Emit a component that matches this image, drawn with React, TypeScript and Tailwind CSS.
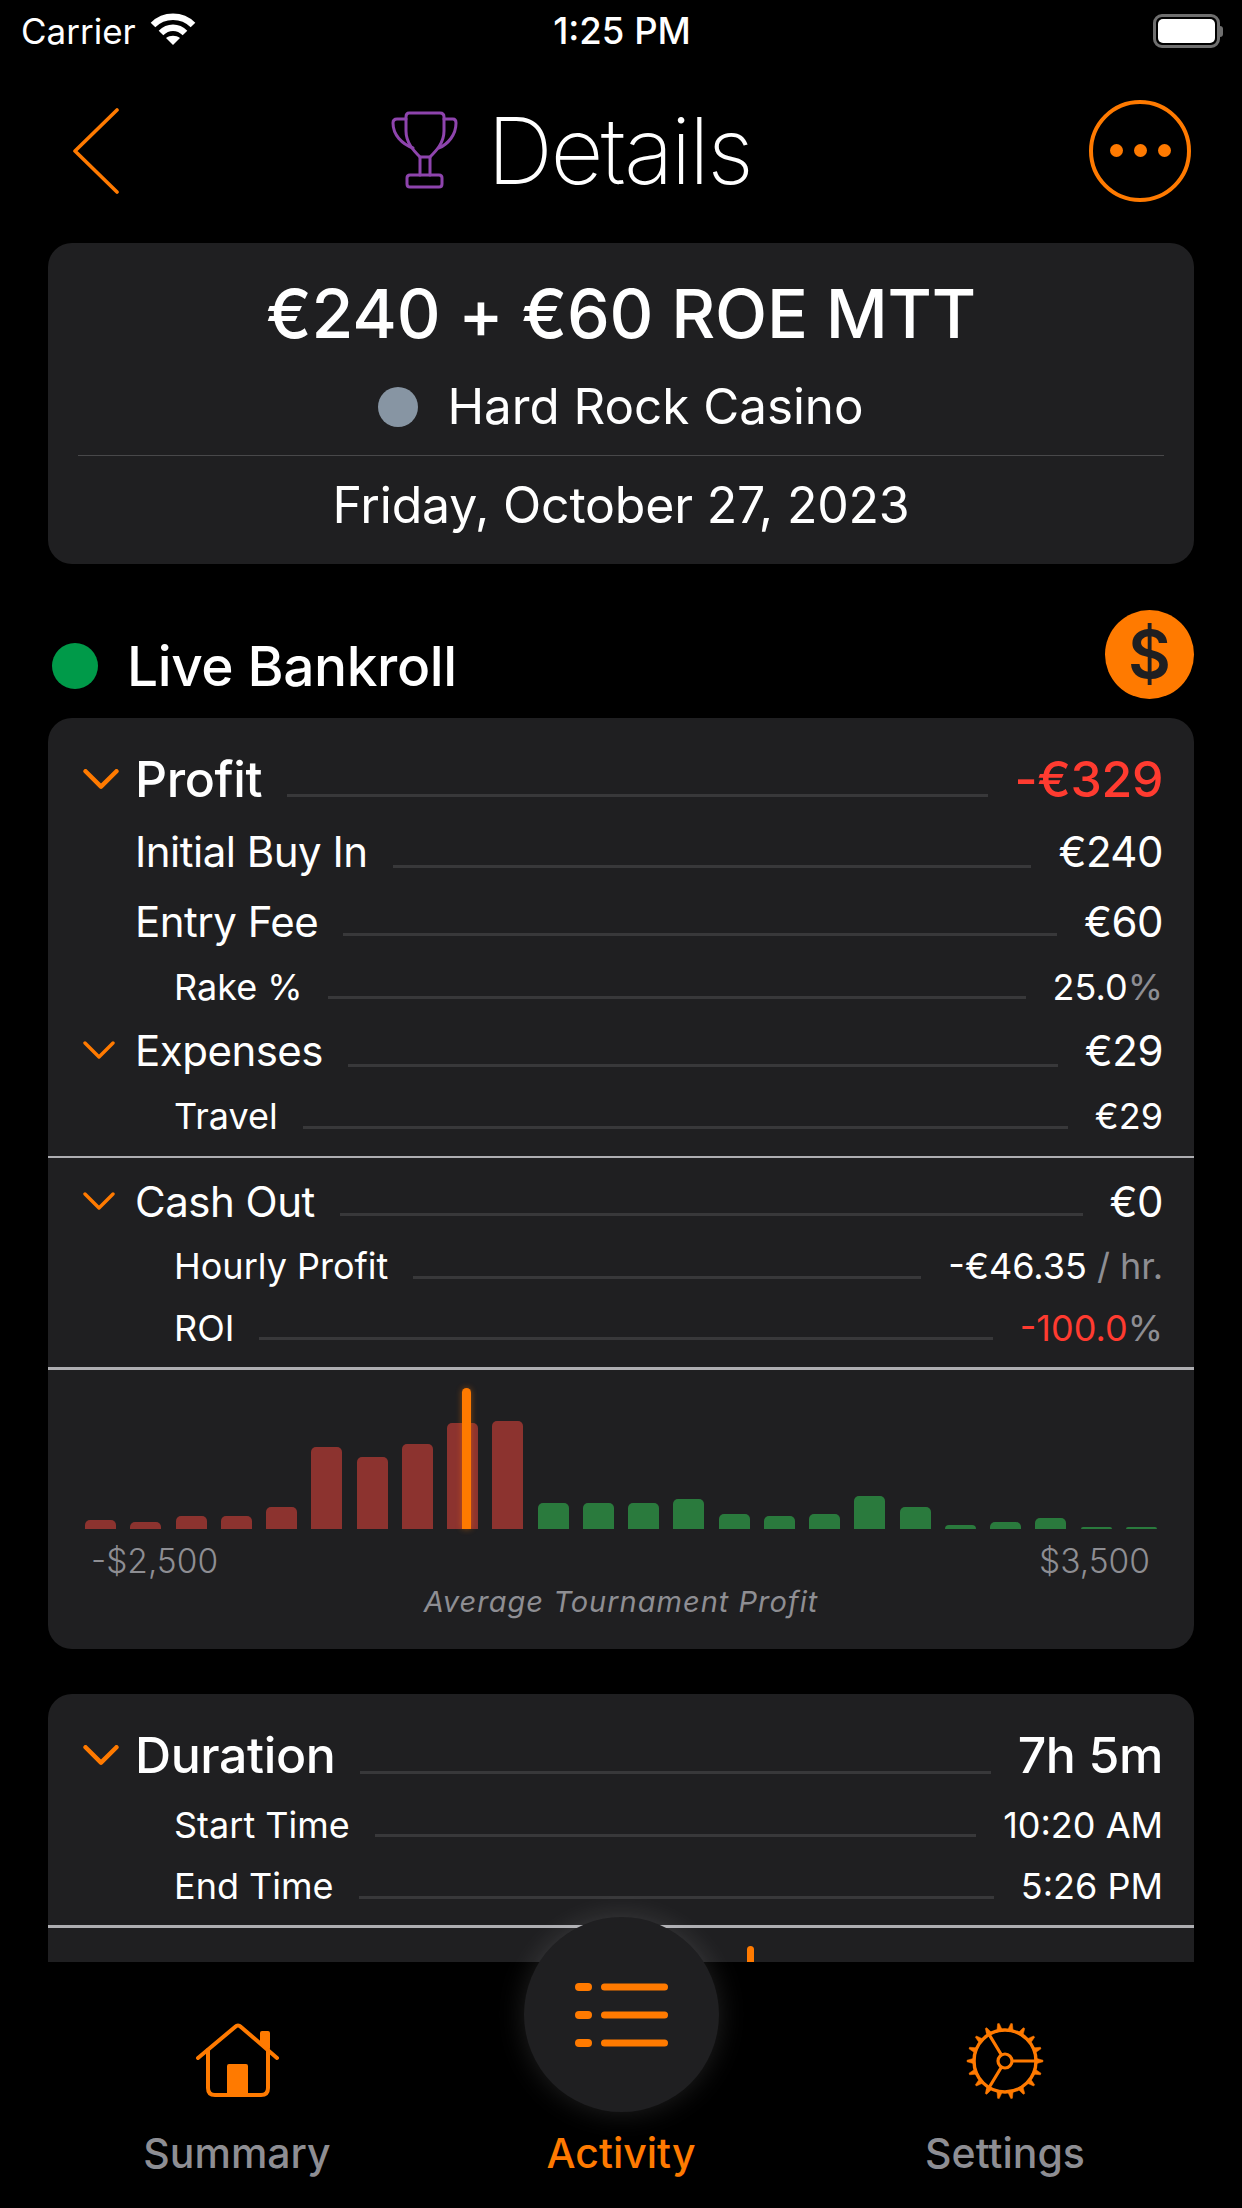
import React from "react";

const RED = [9, 7, 13, 13, 22, 82, 72, 85, 106, 108];
const GREEN = [26, 26, 26, 30, 15, 13, 15, 33, 22, 4, 7, 11, 2, 2];

function Chevron({ big }: { big?: boolean }) {
  return (
    <svg width={big ? 36 : 32} height={big ? 21 : 19} viewBox="0 0 32 19" fill="none" className="shrink-0">
      <path d="M2 2 L16 16 L30 2" stroke="#ff7a00" strokeWidth={big ? 4 : 3.4} strokeLinecap="round" strokeLinejoin="round" />
    </svg>
  );
}

type RowProps = {
  label: string;
  value: React.ReactNode;
  indent?: boolean;
  chevron?: boolean;
  text: string;
  weight?: string;
  lineOffset: string;
  box: string;
  big?: boolean;
};

function Row({ label, value, indent, chevron, text, weight, lineOffset, box, big }: RowProps) {
  return (
    <div className={`flex items-center h-[60px] pr-[31px] text-white ${text} ${weight ?? "font-normal"} ${box} ${indent ? "pl-[126px]" : chevron ? "pl-[35px]" : "pl-[87px]"}`}>
      {chevron && (
        <div className="w-[52px] shrink-0">
          <Chevron big={big} />
        </div>
      )}
      <span className="whitespace-nowrap">{label}</span>
      <div className={`flex-1 h-[3px] bg-[#38383a] ml-[25px] mr-[27px] ${lineOffset}`} />
      <span className="whitespace-nowrap">{value}</span>
    </div>
  );
}

function Trophy() {
  return (
    <svg width="70" height="80" viewBox="20 12 70 80" fill="none" stroke="#8e44ad" strokeWidth="3" strokeLinejoin="round" strokeLinecap="round">
      <path d="M39 14 H70 Q74 14 74 18 V32 C74 44 66 52 60 58 H50 C44 52 36 44 36 32 V18 Q36 14 39 14 Z" />
      <path d="M36 20 H27 Q23 20 23 24 C23 36 32 45 43 49" />
      <path d="M74 20 H83 Q86 20 86 24 C86 36 78 45 69 49" />
      <path d="M50 58 V76 M60 58 V76" />
      <path d="M40 76 H69 Q72 76 72 79 V85 Q72 88 69 88 H40 Q37 88 37 85 V79 Q37 76 40 76 Z" />
    </svg>
  );
}

function Gear() {
  const teeth = Array.from({ length: 18 }, (_, i) => i * 20);
  return (
    <svg width="80" height="80" viewBox="10 10 80 80" fill="none" stroke="#ff7a00">
      {teeth.map((a) => (
        <path key={a} d="M47 20 L49.2 12 H50.8 L53 20 Z" fill="#ff7a00" strokeWidth="0.5" transform={`rotate(${a + 90} 50 50)`} />
      ))}
      <circle cx="50" cy="50" r="31" strokeWidth="3.4" />
      <circle cx="50" cy="50" r="7" strokeWidth="3.2" />
      <path d="M57 50 H81 M46.5 44 L32 20 M46.5 56 L32 80" strokeWidth="3.2" />
    </svg>
  );
}

function Home() {
  return (
    <svg width="84" height="78" viewBox="14 10 84 78" fill="none" stroke="#ff7a00" strokeWidth="4" strokeLinecap="round" strokeLinejoin="round">
      <path d="M17 47 L54 16 Q57 13 60 16 L96 47" />
      <path d="M27 39 V77 Q27 84 34 84 H80 Q87 84 87 77 V39" />
      <path d="M81 32 V22 H87 V37 Z" fill="#ff7a00" />
      <path d="M48 55 H65 V84 H48 Z" fill="#ff7a00" />
    </svg>
  );
}

function Chart() {
  return (
    <div className="relative h-[159px] pl-[37px] pr-[37px]">
      <div className="flex items-end justify-between h-full">
        {RED.map((h, i) => (
          <div key={`r${i}`} className="w-[31px] bg-[#8c332f] rounded-t-[5px]" style={{ height: h }} />
        ))}
        {GREEN.map((h, i) => (
          <div key={`g${i}`} className="w-[31px] bg-[#2a7a3d] rounded-t-[5px]" style={{ height: h }} />
        ))}
      </div>
      <div className="absolute left-[414px] top-[18px] bottom-0 w-[9px] rounded-t-full bg-[#ff7a00] shadow-[0_0_6px_rgba(255,122,0,0.45)]" />
    </div>
  );
}

const ROW_MD = "text-[42px] tracking-[-0.5px]";
const ROW_SM = "text-[36px]";
const ROW_LG = "text-[50px] tracking-[-0.4px]";

export default function App() {
  return (
    <div className="relative w-[1242px] h-[2208px] bg-black overflow-hidden flex flex-col font-['Inter',sans-serif] text-white">
      {/* status bar */}
      <div className="h-[62px] flex items-center pl-[21px] pr-[19px] shrink-0">
        <div className="flex-1 flex items-center gap-[13px] text-[35px]">
          <span>Carrier</span>
          <svg width="48" height="34" viewBox="0 0 46 34" fill="none" stroke="#fff" strokeWidth="6.5" className="-mt-[2px]">
            <path d="M3 12 C14 1 32 1 43 12" />
            <path d="M11 20 C18 13 28 13 35 20" />
            <path d="M23 32 L16 25 C20 22 26 22 30 25 Z" fill="#fff" stroke="none" />
          </svg>
        </div>
        <span className="font-medium text-[36.5px]">1:25 PM</span>
        <div className="flex-1 flex justify-end items-center">
          <div className="w-[67px] h-[34px] rounded-[9px] border-[3px] border-[#6f6f6f] p-[2px]">
            <div className="w-full h-full rounded-[5px] bg-white" />
          </div>
          <div className="w-[3px] h-[11px] bg-[#6f6f6f] rounded-r-full" />
        </div>
      </div>

      {/* header */}
      <div className="h-[181px] shrink-0 flex items-center pl-[73px] pr-[51px] pb-[4px]">
        <svg width="46" height="86" viewBox="0 0 46 86" fill="none" className="shrink-0">
          <path d="M44 2 L2 43 L44 84" stroke="#ff7a00" strokeWidth="3.6" strokeLinecap="round" strokeLinejoin="round" />
        </svg>
        <div className="ml-[271px] flex items-center">
          <Trophy />
          <span className="ml-[27px] text-[92px] leading-none font-extralight tracking-[-2.5px]">Details</span>
        </div>
        <div className="ml-auto w-[102px] h-[102px] rounded-full border-[4px] border-[#ff7a00] flex items-center justify-center gap-[11px]">
          <div className="w-[13px] h-[13px] rounded-full bg-[#ff7a00]" />
          <div className="w-[13px] h-[13px] rounded-full bg-[#ff7a00]" />
          <div className="w-[13px] h-[13px] rounded-full bg-[#ff7a00]" />
        </div>
      </div>

      {/* scrolling content */}
      <div className="h-[1719px] shrink-0 overflow-hidden px-[48px]">
        <div className="h-[321px] rounded-[24px] bg-[#1f1f21] flex flex-col items-center pt-[20px]">
          <div className="text-[68px] leading-[100px] font-medium tracking-[-0.2px] whitespace-nowrap">€240 + €60 ROE MTT</div>
          <div className="flex items-center h-[60px] mt-[14px]">
            <div className="w-[40px] h-[40px] rounded-full bg-[#8795a3]" />
            <span className="ml-[29px] text-[49.3px]">Hard Rock Casino</span>
          </div>
          <div className="w-[1086px] h-[1px] bg-[#48484a] mt-[18px]" />
          <div className="text-[50px] tracking-[-0.2px] leading-[98px]">Friday, October 27, 2023</div>
        </div>

        <div className="flex items-start h-[89px] mt-[46px]">
          <div className="flex items-center h-[80px] mt-[16px] ml-[4px]">
            <div className="w-[46px] h-[46px] rounded-full bg-[#009a49]" />
            <span className="ml-[29px] text-[55px] tracking-[-0.4px] font-medium whitespace-nowrap">Live Bankroll</span>
          </div>
          <div className="ml-auto w-[89px] h-[89px] rounded-full bg-[#ff7a00] flex items-center justify-center text-[#1f1f21] text-[66px] font-semibold">$</div>
        </div>

        <div className="mt-[19px] h-[931px] rounded-[24px] bg-[#1f1f21] pt-[31px] overflow-hidden">
          <Row label="Profit" big chevron text={ROW_LG} weight="font-medium" lineOffset="mt-[32px]" box="" value={<span className="text-[#ff3b30]">-€329</span>} />
          <Row label="Initial Buy In" text={ROW_MD} lineOffset="mt-[30px]" box="mt-[12px]" value="€240" />
          <Row label="Entry Fee" text={ROW_MD} lineOffset="mt-[26px]" box="mt-[10px]" value="€60" />
          <Row label="Rake %" indent text={ROW_SM} lineOffset="mt-[20px]" box="mt-[6px]" value={<>25.0<span className="text-[#8e8e93]">%</span></>} />
          <Row label="Expenses" chevron text={ROW_MD} lineOffset="mt-[30px]" box="mt-[3px]" value="€29" />
          <Row label="Travel" indent text={ROW_SM} lineOffset="mt-[22px]" box="mt-[6px]" value="€29" />
          <div className="h-[2px] bg-[#aeaeb2] mt-[10px]" />
          <Row label="Cash Out" chevron text={ROW_MD} lineOffset="mt-[26px]" box="mt-[13px]" value="€0" />
          <Row label="Hourly Profit" indent text={ROW_SM} lineOffset="mt-[22px]" box="mt-[5px]" value={<>-€46.35 <span className="text-[#8e8e93]">/ hr.</span></>} />
          <Row label="ROI" indent text={ROW_SM} lineOffset="mt-[20px]" box="mt-[2px]" value={<><span className="text-[#ff3b30]">-100.0</span><span className="text-[#8e8e93]">%</span></>} />
          <div className="h-[3px] bg-[#aeaeb2] mt-[9px]" />
          <Chart />
          <div className="flex justify-between items-center h-[64px] pl-[43px] pr-[44px] text-[33.5px] font-light text-[#8e8e93]">
            <span>-$2,500</span>
            <span>$3,500</span>
          </div>
          <div className="-mt-[2px] text-center italic text-[29px] leading-[22px] tracking-[1px] text-[#8e8e93]">Average Tournament Profit</div>
        </div>

        <div className="mt-[45px] h-[600px] rounded-t-[24px] bg-[#1f1f21] pt-[31px] overflow-hidden">
          <Row label="Duration" big chevron text={ROW_LG} weight="font-medium" lineOffset="mt-[34px]" box="" value="7h 5m" />
          <Row label="Start Time" indent text={ROW_SM} lineOffset="mt-[20px]" box="mt-[10px]" value="10:20 AM" />
          <Row label="End Time" indent text={ROW_SM} lineOffset="mt-[22px]" box="mt-[1px]" value="5:26 PM" />
          <div className="h-[3px] bg-[#aeaeb2] mt-[9px]" />
          <div className="relative h-[159px]">
            <div className="absolute left-[699px] top-[18px] bottom-0 w-[7px] rounded-t-full bg-[#ff7a00]" />
          </div>
        </div>
      </div>

      {/* tab bar */}
      <div className="h-[246px] shrink-0 flex px-[45px] bg-black text-[41px] font-medium">
        <div className="w-[384px] flex flex-col items-center">
          <div className="h-[161px] pt-[59px]">
            <Home />
          </div>
          <span className="text-[#8e8e93] leading-[60px]">Summary</span>
        </div>
        <div className="w-[384px] flex flex-col items-center">
          <div className="h-[161px]" />
          <span className="text-[#ff7a00] leading-[60px]">Activity</span>
        </div>
        <div className="w-[384px] flex flex-col items-center">
          <div className="h-[161px] pt-[59px]">
            <Gear />
          </div>
          <span className="text-[#8e8e93] leading-[60px]">Settings</span>
        </div>
      </div>

      {/* center action button overlapping the content */}
      <div className="absolute left-[524px] top-[1917px] w-[195px] h-[195px] rounded-full bg-[#1f1f21] shadow-[0_0_28px_rgba(255,255,255,0.13)] flex items-center justify-center">
        <svg width="94" height="64" viewBox="0 0 94 64" fill="#ff7a00">
          <rect x="0" y="0" width="17" height="8" rx="4" />
          <rect x="26" y="0.5" width="67" height="7" rx="3.5" />
          <rect x="0" y="28" width="17" height="8" rx="4" />
          <rect x="26" y="28.5" width="67" height="7" rx="3.5" />
          <rect x="0" y="56" width="17" height="8" rx="4" />
          <rect x="26" y="56.5" width="67" height="7" rx="3.5" />
        </svg>
      </div>
    </div>
  );
}
